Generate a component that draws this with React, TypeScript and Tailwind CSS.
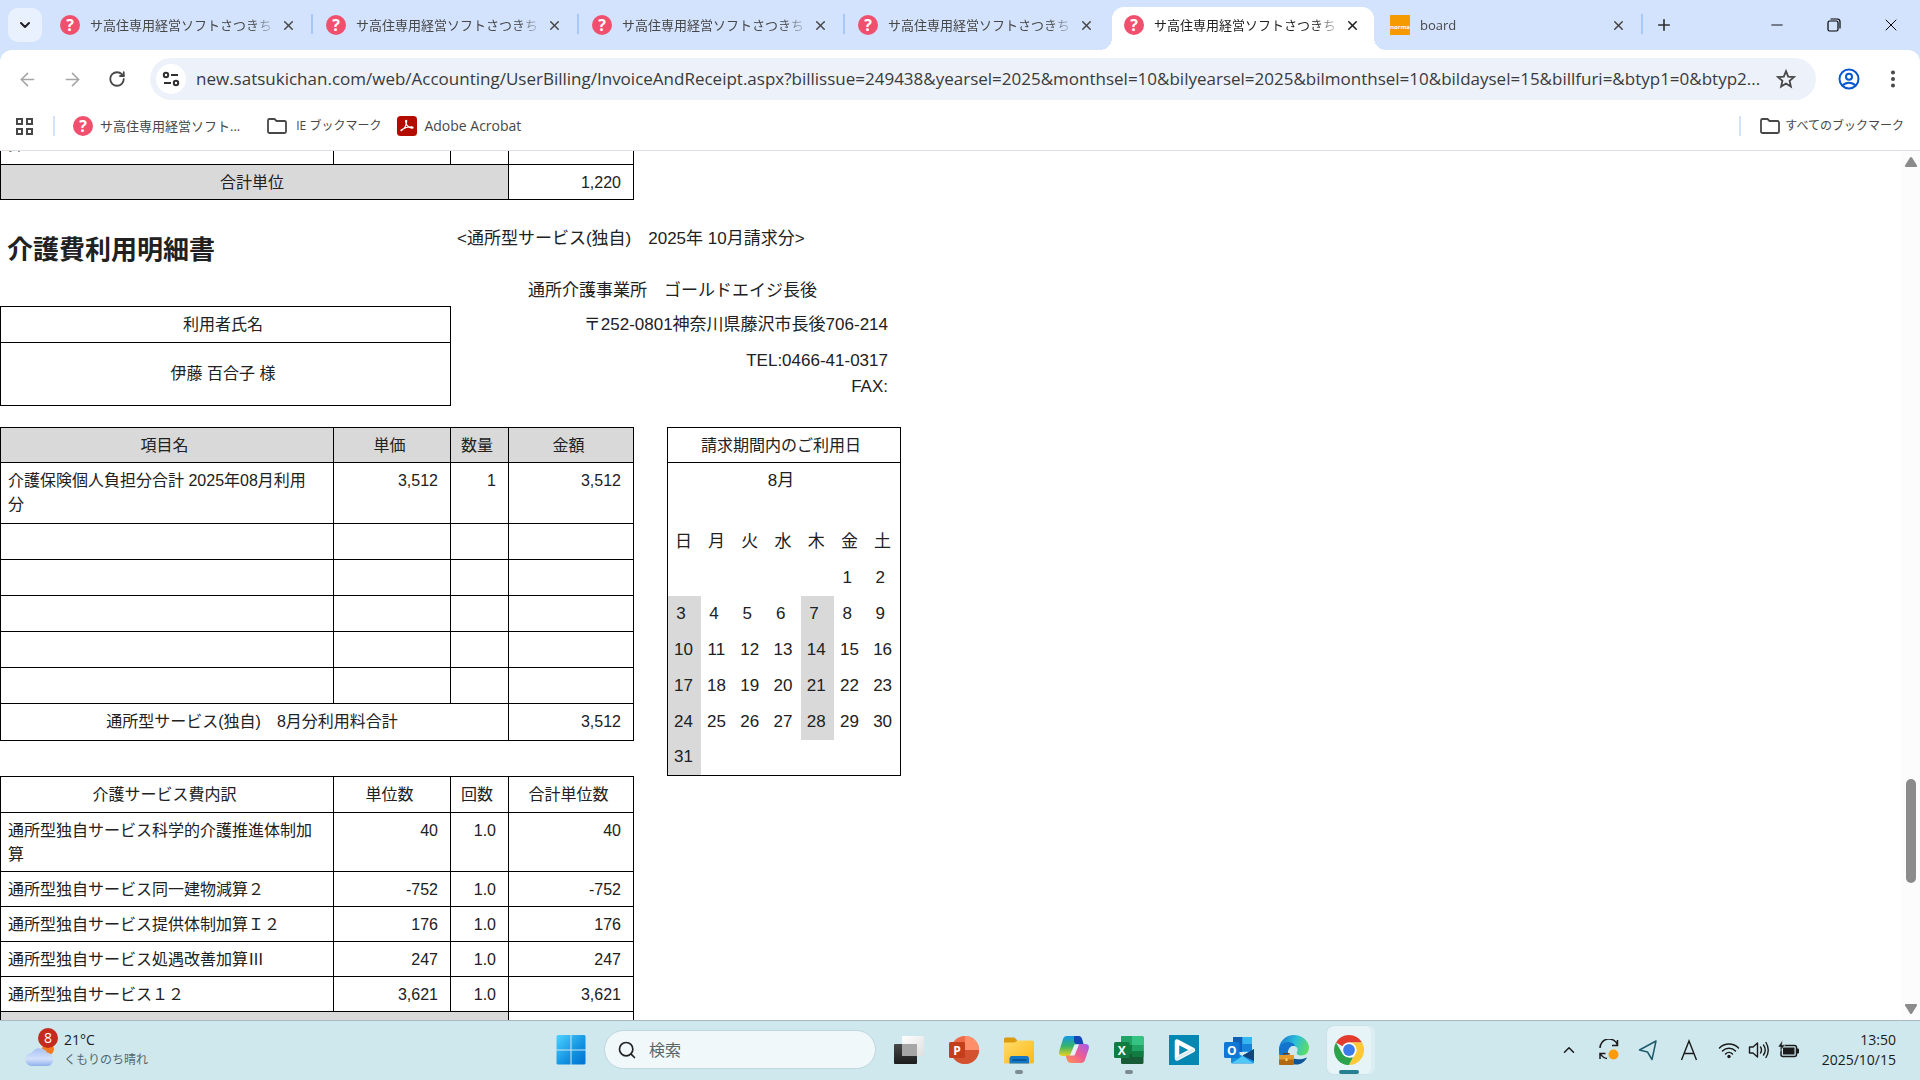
import type { ReactNode } from "react";
import {
  ArrowLeft,
  ArrowRight,
  ChevronDown,
  ChevronUp,
  EllipsisVertical,
  Minus,
  Plus,
  RotateCw,
  Search,
  X,
} from "lucide-react";

const TAB_TITLE = "サ高住専用経営ソフトさつきち";
const PAGE_URL =
  "new.satsukichan.com/web/Accounting/UserBilling/InvoiceAndReceipt.aspx?billissue=249438&yearsel=2025&monthsel=10&bilyearsel=2025&bilmonthsel=10&bildaysel=15&billfuri=&btyp1=0&btyp2...";

const services = [
  { name: "通所型独自サービス科学的介護推進体制加算", units: "40", total: "40" },
  { name: "通所型独自サービス同一建物減算２", units: "-752", total: "-752" },
  { name: "通所型独自サービス提供体制加算Ｉ２", units: "176", total: "176" },
  { name: "通所型独自サービス処遇改善加算Ⅲ", units: "247", total: "247" },
  { name: "通所型独自サービス１２", units: "3,621", total: "3,621" },
];

const weekdays = ["日", "月", "火", "水", "木", "金", "土"];
const weeks = [
  [0, 0, 0, 0, 0, 1, 2],
  [3, 4, 5, 6, 7, 8, 9],
  [10, 11, 12, 13, 14, 15, 16],
  [17, 18, 19, 20, 21, 22, 23],
  [24, 25, 26, 27, 28, 29, 30],
  [31, 0, 0, 0, 0, 0, 0],
];

function Favicon() {
  return (
    <span className="flex size-5 shrink-0 items-center justify-center rounded-full bg-[#f0506e] text-base leading-5 font-bold text-white">
      ?
    </span>
  );
}

function FolderIcon() {
  return (
    <svg width="22" height="18" viewBox="0 0 22 18" fill="none" stroke="currentColor" strokeWidth="1.800" strokeLinejoin="round">
      <path d="M2 3.500A1.500 1.500 0 0 1 3.500 2H8.500L10.500 4H18.500A1.500 1.500 0 0 1 20 5.500V14.500A1.500 1.500 0 0 1 18.500 16H3.500A1.500 1.500 0 0 1 2 14.500z" />
    </svg>
  );
}

function Tab({
  title,
  active,
  divider,
  icon,
}: {
  title: string;
  active?: boolean;
  divider?: boolean;
  icon: ReactNode;
}) {
  return (
    <div className="relative flex h-full w-[266px] min-w-0 items-end">
      <div
        className={
          active
            ? "relative flex h-[43px] w-[262px] items-center rounded-t-xl bg-white pr-3 pb-[7px] pl-3 text-[#1f1f1f]"
            : "flex h-[43px] w-[262px] items-center pr-3 pb-[7px] pl-3 text-[#474747]"
        }
      >
        {active && (
          <>
            <span className="absolute bottom-0 -left-3 size-3 bg-[radial-gradient(circle_at_0_0,transparent_12px,white_12px)]" />
            <span className="absolute -right-3 bottom-0 size-3 bg-[radial-gradient(circle_at_100%_0,transparent_12px,white_12px)]" />
          </>
        )}
        {icon}
        <span className="ml-[10px] flex-1 overflow-hidden [mask-image:linear-gradient(90deg,black_88%,#0003)] text-[13px] leading-5 whitespace-nowrap">
          {title}
        </span>
        <button aria-label="タブを閉じる" className="ml-[6px] flex size-5 items-center justify-center">
          <X size={15} strokeWidth={2.4} />
        </button>
      </div>
      {divider && <span className="mb-4 ml-px h-5 w-[2px] bg-[#a8c7fa]" />}
    </div>
  );
}

function TabStrip() {
  return (
    <header className="flex h-[50px] shrink-0 items-center bg-[#d3e3fd] pl-2">
      <button
        aria-label="タブを検索"
        className="flex size-[34px] shrink-0 items-center justify-center rounded-[10px] bg-[#e9f1fe] text-[#1f1f1f]"
      >
        <ChevronDown size={16} strokeWidth={3} />
      </button>
      <div className="ml-[6px] flex h-full">
        <Tab title={TAB_TITLE} divider icon={<Favicon />} />
        <Tab title={TAB_TITLE} divider icon={<Favicon />} />
        <Tab title={TAB_TITLE} divider icon={<Favicon />} />
        <Tab title={TAB_TITLE} icon={<Favicon />} />
        <Tab title={TAB_TITLE} active icon={<Favicon />} />
        <Tab
          title="board"
          divider
          icon={
            <span className="flex size-5 shrink-0 items-center justify-center bg-[#f59a00] pt-1 text-[6px] leading-4 font-bold text-white">
              norma
            </span>
          }
        />
      </div>
      <button aria-label="新しいタブ" className="ml-2 flex size-6 items-center justify-center text-[#303030]">
        <Plus size={18} strokeWidth={2.2} />
      </button>
      <div className="ml-auto flex pr-px text-black">
        <button aria-label="最小化" className="flex h-8 w-[57px] items-center justify-center">
          <Minus size={18} strokeWidth={1.2} />
        </button>
        <button aria-label="元に戻す" className="flex h-8 w-[57px] items-center justify-center">
          <svg width="14" height="14" viewBox="0 0 14 14" fill="none" stroke="currentColor" strokeWidth="1.2">
            <rect x="1" y="3" width="10" height="10" rx="1.5" />
            <path d="M3.5 1h7A2.5 2.5 0 0 1 13 3.500v7" />
          </svg>
        </button>
        <button aria-label="閉じる" className="flex h-8 w-[57px] items-center justify-center">
          <X size={20} strokeWidth={1.2} />
        </button>
      </div>
    </header>
  );
}

function Toolbar() {
  return (
    <div className="shrink-0 bg-[#d3e3fd]">
      <div className="flex h-[58px] items-center rounded-t-xl bg-white pr-4 pl-4 text-[#474747]">
        <button aria-label="戻る" className="flex w-[22px] justify-center text-[#a6a6a6]">
          <ArrowLeft size={21} strokeWidth={1.8} />
        </button>
        <button aria-label="進む" className="ml-[23px] flex w-[22px] justify-center text-[#a6a6a6]">
          <ArrowRight size={21} strokeWidth={1.8} />
        </button>
        <button aria-label="再読み込み" className="ml-[23px] flex w-[22px] justify-center">
          <RotateCw size={18} strokeWidth={2.4} />
        </button>
        <div className="ml-[22px] flex h-[42px] min-w-0 flex-1 items-center rounded-full bg-[#ecf1fa] pr-5 pl-[6px]">
          <button
            aria-label="サイト情報を表示"
            className="flex size-[30px] shrink-0 items-center justify-center rounded-full bg-white text-[#303030]"
          >
            <svg width="18" height="18" viewBox="0 0 18 18" fill="none" stroke="currentColor" strokeWidth="2">
              <circle cx="4" cy="5" r="2.200" />
              <path d="M9 5h7M2 13h7" />
              <circle cx="14" cy="13" r="2.200" />
            </svg>
          </button>
          <input
            aria-label="アドレス検索バー"
            defaultValue={PAGE_URL}
            className="ml-[10px] min-w-0 flex-1 bg-transparent text-[17px] leading-6 text-[#3a3a3a] outline-none"
          />
          <button aria-label="このタブをブックマークに追加">
            <svg width="20" height="20" viewBox="0 0 20 20" fill="none" stroke="currentColor" strokeWidth="1.800">
              <path d="M10 2.200 12.200 7.600 18 8.100 13.600 11.900 14.900 17.600 10 14.600 5.100 17.600 6.400 11.900 2 8.100 7.800 7.600z" />
            </svg>
          </button>
        </div>
        <button aria-label="プロフィール" className="ml-[22px] text-[#0b57d0]">
          <svg width="22" height="22" viewBox="0 0 22 22" fill="none" stroke="currentColor" strokeWidth="2">
            <circle cx="11" cy="11" r="9.500" />
            <circle cx="11" cy="8.800" r="3" />
            <path d="M4.500 17.500c3.500-3.800 9.500-3.800 13 0" />
          </svg>
        </button>
        <button aria-label="メニュー" className="ml-[22px]">
          <EllipsisVertical size={22} strokeWidth={2.400} />
        </button>
      </div>
      <nav className="flex h-[43px] items-center border-b border-[#dcdfe3] bg-white pr-4 pb-[6px] pl-[15px] text-[13px] leading-5 text-[#474747]">
        <button aria-label="アプリ">
          <svg width="19" height="19" viewBox="0 0 19 19" fill="none" stroke="currentColor" strokeWidth="2">
            <path d="M2 2h5v5H2zM12 2h5v5h-5zM2 12h5v5H2zM12 12h5v5h-5z" />
          </svg>
        </button>
        <span className="ml-[19px] h-5 w-[2px] bg-[#d3e3fd]" />
        <a href="#" className="ml-[18px] flex items-center gap-[7px]">
          <Favicon />
          サ高住専用経営ソフト...
        </a>
        <a href="#" className="ml-[26px] flex items-center gap-2 text-xs">
          <FolderIcon />
          IE ブックマーク
        </a>
        <a href="#" className="ml-4 flex items-center gap-[7px] text-sm">
          <svg width="20" height="20" viewBox="0 0 20 20">
            <rect width="20" height="20" rx="3.500" fill="#b30b00" />
            <path
              d="M4.300 14.600c2.600-1.300 5-5.300 5.400-9.300.1-1.400-1.300-1.300-1.100 0 .5 3.400 3.200 6.300 6.400 6.900 1.500.2 1.400-1.300 0-1.400-3.400-.3-7 .8-10.200 2.700-.9.500-1.100 1.400-.5 1.100z"
              fill="none"
              stroke="#fff"
              strokeWidth="1.200"
            />
          </svg>
          Adobe Acrobat
        </a>
        <span className="ml-auto h-5 w-[2px] bg-[#d3e3fd]" />
        <a href="#" className="ml-[18px] flex items-center gap-1 text-xs">
          <FolderIcon />
          すべてのブックマーク
        </a>
      </nav>
    </div>
  );
}

function Cell({
  children,
  align = "right",
  span,
}: {
  children?: ReactNode;
  align?: "left" | "right";
  span?: number;
}) {
  return (
    <td
      colSpan={span}
      className={
        align === "left"
          ? "border border-black pt-[6px] pr-4 pb-1 pl-[7px] text-left align-top"
          : "border border-black pt-[6px] pr-3 pb-1 pl-[7px] text-right align-top"
      }
    >
      {children}
    </td>
  );
}

function Head({ children, span, shaded }: { children: ReactNode; span?: number; shaded?: boolean }) {
  return (
    <th
      colSpan={span}
      className={
        shaded
          ? "border border-black bg-[#d9d9d9] pt-[6px] pr-3 pb-1 pl-[7px] text-center font-normal"
          : "border border-black py-[5px] pr-3 pl-[7px] text-center font-normal"
      }
    >
      {children}
    </th>
  );
}

function LedgerTable({ children }: { children: ReactNode }) {
  return (
    <table className="w-[634px] table-fixed border-collapse text-base leading-6">
      <colgroup>
        <col className="w-[333px]" />
        <col className="w-[117px]" />
        <col className="w-[58px]" />
        <col className="w-[125px]" />
      </colgroup>
      <tbody>{children}</tbody>
    </table>
  );
}

function StatementHeader() {
  return (
    <section className="flex">
      <div className="w-[451px] pt-[30px]">
        <h1 className="pl-[7px] text-[26px] leading-10 font-bold">介護費利用明細書</h1>
        <table className="mt-9 w-full border-collapse text-base leading-6">
          <tbody>
            <tr className="h-9">
              <Head>利用者氏名</Head>
            </tr>
            <tr className="h-[63px]">
              <td className="border border-black pr-3 pl-[7px] text-center">伊藤 百合子 様</td>
            </tr>
          </tbody>
        </table>
      </div>
      <div className="w-[437px] pt-[27px] pl-[6px] text-[17px] leading-6">
        <p>&lt;通所型サービス(独自)　2025年 10月請求分&gt;</p>
        <p className="mt-7 text-center">通所介護事業所　ゴールドエイジ長後</p>
        <p className="mt-[10px] text-right">〒252-0801神奈川県藤沢市長後706-214</p>
        <p className="mt-3 text-right">TEL:0466-41-0317</p>
        <p className="mt-[2px] text-right">FAX:</p>
      </div>
    </section>
  );
}

function UsageCalendar() {
  return (
    <table className="w-[234px] table-fixed border-collapse border border-black text-[17px] leading-6">
      <thead>
        <tr>
          <th colSpan={7} className="border border-black pt-[6px] pr-3 pb-1 pl-[6px] text-base leading-6 font-normal">
            請求期間内のご利用日
          </th>
        </tr>
        <tr className="h-[61px]">
          <th colSpan={7} className="pt-[6px] pr-3 pl-[6px] align-top font-normal">
            8月
          </th>
        </tr>
        <tr className="h-9">
          {weekdays.map((day) => (
            <th key={day} className="pr-[2px] font-normal">
              {day}
            </th>
          ))}
        </tr>
      </thead>
      <tbody>
        {weeks.map((week, row) => (
          <tr key={row} className="h-9">
            {week.map((day, col) => (
              <td
                key={col}
                className={
                  day >= 3 && (col === 0 || col === 4)
                    ? "bg-[#d9d9d9] pr-[2px] text-center"
                    : "pr-[2px] text-center"
                }
              >
                {day > 0 && (day < 10 ? `${day}\u00a0` : day)}
              </td>
            ))}
          </tr>
        ))}
      </tbody>
    </table>
  );
}

function Statement() {
  return (
    <main className="-mt-[19px] flex-1 text-[#212121]">
      <LedgerTable>
        <tr className="h-8">
          <td className="border border-black pr-3 pb-[7px] pl-[7px] text-left">算</td>
          <td className="border border-black" />
          <td className="border border-black" />
          <td className="border border-black" />
        </tr>
        <tr>
          <Head span={3} shaded>
            合計単位
          </Head>
          <Cell>1,220</Cell>
        </tr>
      </LedgerTable>
      <StatementHeader />
      <div className="mt-[21px] flex items-start gap-[33px]">
        <div>
          <LedgerTable>
            <tr>
              <Head shaded>項目名</Head>
              <Head shaded>単価</Head>
              <Head shaded>数量</Head>
              <Head shaded>金額</Head>
            </tr>
            <tr className="h-[61px]">
              <Cell align="left">介護保険個人負担分合計 2025年08月利用分</Cell>
              <Cell>3,512</Cell>
              <Cell>1</Cell>
              <Cell>3,512</Cell>
            </tr>
            {[0, 1, 2, 3, 4].map((row) => (
              <tr key={row} className="h-9">
                <Cell />
                <Cell />
                <Cell />
                <Cell />
              </tr>
            ))}
            <tr className="h-[37px]">
              <Head span={3}>通所型サービス(独自)　8月分利用料合計</Head>
              <Cell>3,512</Cell>
            </tr>
          </LedgerTable>
          <div className="mt-[35px]">
            <LedgerTable>
              <tr className="h-9">
                <Head>介護サービス費内訳</Head>
                <Head>単位数</Head>
                <Head>回数</Head>
                <Head>合計単位数</Head>
              </tr>
              {services.map((service) => (
                <tr key={service.name}>
                  <Cell align="left">{service.name}</Cell>
                  <Cell>{service.units}</Cell>
                  <Cell>1.0</Cell>
                  <Cell>{service.total}</Cell>
                </tr>
              ))}
              <tr className="h-9">
                <td colSpan={3} className="border border-black bg-[#d9d9d9]" />
                <Cell />
              </tr>
            </LedgerTable>
          </div>
        </div>
        <UsageCalendar />
      </div>
    </main>
  );
}

function Scrollbar() {
  return (
    <div className="flex w-[19px] shrink-0 flex-col items-center bg-[#fcfcfc] py-[5px] text-[#8b8b8b]">
      <svg width="14" height="12" viewBox="0 0 14 12" fill="currentColor">
        <path d="M6 1.500 1 9.500Q.500 11 2 11h10q1.500 0 1-1.500L8 1.500Q7 .300 6 1.500z" />
      </svg>
      <div className="flex w-full flex-1 flex-col items-center">
        <div className="grow-[612]" />
        <div className="w-[10px] grow-[104] rounded-full bg-[#8b8b8b]" />
        <div className="grow-[120]" />
      </div>
      <svg width="14" height="12" viewBox="0 0 14 12" fill="currentColor">
        <path d="M6 10.500 1 2.500Q.500 1 2 1h10q1.500 0 1 1.500L8 10.500Q7 11.700 6 10.500z" />
      </svg>
    </div>
  );
}

function TaskButton({
  label,
  running,
  active,
  children,
}: {
  label: string;
  running?: boolean;
  active?: boolean;
  children: ReactNode;
}) {
  return (
    <button
      aria-label={label}
      className={
        active
          ? "relative flex h-12 w-11 shrink-0 items-center justify-center rounded-md bg-[#e6f3f7] shadow-[4px_0_0_#dbeef3,0_0_1px_#9fb8c0]"
          : "relative flex h-12 w-11 shrink-0 items-center justify-center"
      }
    >
      {children}
      {running && <span className="absolute bottom-0 h-1 w-2 rounded-full bg-[#7d8b8f]" />}
      {active && <span className="absolute bottom-0 h-1 w-5 rounded-full bg-[#27808f]" />}
    </button>
  );
}

function StartIcon() {
  return (
    <svg width="30" height="30" viewBox="0 0 30 30">
      <defs>
        <linearGradient id="start" gradientUnits="userSpaceOnUse" x1="0" y1="0" x2="30" y2="30">
          <stop stopColor="#4fd3ff" />
          <stop offset=".6" stopColor="#1290e0" />
          <stop offset="1" stopColor="#0070d0" />
        </linearGradient>
      </defs>
      <path fill="url(#start)" d="M1.500 0H14.500V14.500H.500V1.500zM15.500 0H28.500L29.500 1V14.500H15.500zM.500 15.500H14.500V29.500H1.500L.500 28.500zM15.500 15.500H29.500V28.500L28.500 29.500H15.500z" />
    </svg>
  );
}

function TaskViewIcon() {
  return (
    <svg width="30" height="30" viewBox="0 0 30 30">
      <defs>
        <linearGradient id="tv-dark" x1="0" y1="0" x2="0" y2="1">
          <stop stopColor="#484848" />
          <stop offset="1" stopColor="#1c1c1c" />
        </linearGradient>
        <linearGradient id="tv-light" x1="0" y1="0" x2="1" y2="1">
          <stop stopColor="#fff" />
          <stop offset="1" stopColor="#dedede" />
        </linearGradient>
      </defs>
      <rect x="0" y="9" width="23" height="20" rx="1" fill="url(#tv-dark)" />
      <rect x="8" y="1" width="22" height="20" rx="1" fill="url(#tv-light)" />
      <rect x="8" y="9" width="15" height="12" fill="#a6a6a6" />
    </svg>
  );
}

function PowerPointIcon() {
  return (
    <svg width="30" height="30" viewBox="0 0 30 30">
      <circle cx="16" cy="15" r="14" fill="#ed6c47" />
      <path d="M16 1a14 14 0 0 1 14 14H16z" fill="#ff8f6b" />
      <path d="M2 15h28a14 14 0 0 1-28 0z" fill="#d35230" />
      <rect x="0" y="7" width="16" height="16" rx="1.500" fill="#c43e1c" />
      <text x="8" y="19.500" textAnchor="middle" fontSize="12" fontWeight="700" fill="#fff">
        P
      </text>
    </svg>
  );
}

function ExplorerIcon() {
  return (
    <svg width="30" height="30" viewBox="0 0 30 30">
      <defs>
        <linearGradient id="folder" x1="0" y1="0" x2="1" y2="1">
          <stop stopColor="#ffdc6b" />
          <stop offset="1" stopColor="#fbb914" />
        </linearGradient>
      </defs>
      <path d="M0 4a1.500 1.500 0 0 1 1.500-1.500h9L13 5v5H0z" fill="#dc9a0c" />
      <path d="M0 7.500h10.500L13.500 5.500H28.500A1.500 1.500 0 0 1 30 7v20a1.500 1.500 0 0 1-1.500 1.500h-27A1.500 1.500 0 0 1 0 27z" fill="url(#folder)" />
      <path d="M5.500 28.500V23.500a2.500 2.500 0 0 1 2.500-2.500h14.500a2.500 2.500 0 0 1 2.500 2.500V28.500z" fill="#1377c9" />
      <path d="M9 25h13" stroke="#0a4e91" strokeWidth="1.500" strokeLinecap="round" />
    </svg>
  );
}

function CopilotIcon() {
  return (
    <svg width="30" height="30" viewBox="0 0 30 30">
      <defs>
        <linearGradient id="cp-a" x1="0" y1="0" x2="0" y2="1">
          <stop stopColor="#1597e8" />
          <stop offset=".5" stopColor="#33b36b" />
          <stop offset="1" stopColor="#e9d31b" />
        </linearGradient>
        <linearGradient id="cp-b" x1="1" y1="0" x2="0" y2="1">
          <stop stopColor="#a35af0" />
          <stop offset=".5" stopColor="#ef5d93" />
          <stop offset="1" stopColor="#ff9a4d" />
        </linearGradient>
      </defs>
      <path d="M8 1h11q3 0 4 3l1.500 5H19q-3 0-4 3l-2 6q-1 3-4 3H4q-5 0-3.700-5L4 4q1-3 4-3z" fill="url(#cp-a)" />
      <path d="M15 1h4.500q2.500 0 3.500 3l1.500 5.500H19q-3 0-4-3z" fill="#1546b8" />
      <path d="M22 28H12q-3 0-4-3l-1.500-4.500H11q3 0 4-3l2-6q1-2.500 4-2.500h5q5 0 3.700 5L26 25q-1 3-4 3z" fill="url(#cp-b)" />
      <path d="M15.500 9.500h4.500l-4.500 11h-4.500z" fill="#e3f2f5" />
    </svg>
  );
}

function ExcelIcon() {
  return (
    <svg width="30" height="30" viewBox="0 0 30 30">
      <rect x="7" y="1" width="22.500" height="28" rx="1.500" fill="#185c37" />
      <path d="M7 2.500A1.500 1.500 0 0 1 8.500 1H18v9H7z" fill="#21a366" />
      <path d="M18 1h10A1.500 1.500 0 0 1 29.500 2.500V10H18z" fill="#33c481" />
      <path d="M7 10h11v9H7z" fill="#107c41" />
      <path d="M18 10h11.500v9H18z" fill="#21a366" />
      <path d="M18 16h11.500v6H18z" fill="#107c41" />
      <rect x="0" y="7" width="15.500" height="16" rx="1.500" fill="#107c41" />
      <text x="7.750" y="19.500" textAnchor="middle" fontSize="12" fontWeight="700" fill="#fff">
        X
      </text>
    </svg>
  );
}

function PlayerIcon() {
  return (
    <svg width="30" height="30" viewBox="0 0 30 30">
      <rect width="30" height="30" fill="#0487b2" />
      <path d="M8 6.500v17l16-8.500z" fill="none" stroke="#fff" strokeWidth="4.500" strokeLinejoin="round" />
      <path d="M8 23.500 24 15" stroke="#dcecf2" strokeWidth="3" strokeLinecap="round" />
    </svg>
  );
}

function OutlookIcon() {
  return (
    <svg width="30" height="30" viewBox="0 0 30 30">
      <rect x="9" y="2" width="19" height="15" rx="1" fill="#28a8ea" />
      <path d="M9 2h9.500v7H9z" fill="#0f5fb3" />
      <path d="M18.500 2H28v7h-9.500z" fill="#35b8f1" />
      <path d="M9 9h9.500v8H9z" fill="#0a64c4" />
      <path d="M18.500 9H28v7h-9.500z" fill="#1684d8" />
      <path d="M7 15l11.500 6L30 14v13a1.500 1.500 0 0 1-1.500 1.500h-20A1.500 1.500 0 0 1 7 27z" fill="#1490df" />
      <path d="M30 14v12L18.500 20.500z" fill="#12457d" />
      <path d="M8 28l10.500-7 10.500 7z" fill="#50c8f5" />
      <rect x="0" y="7" width="15.500" height="16" rx="1.500" fill="#0f78d4" />
      <text x="7.750" y="19.500" textAnchor="middle" fontSize="12" fontWeight="700" fill="#fff">
        O
      </text>
    </svg>
  );
}

function EdgeIcon() {
  return (
    <svg width="30" height="30" viewBox="0 0 30 30">
      <defs>
        <linearGradient id="edge-top" x1="0" y1=".3" x2="1" y2=".6">
          <stop stopColor="#1478d4" />
          <stop offset=".5" stopColor="#2cc0d8" />
          <stop offset="1" stopColor="#5fdc62" />
        </linearGradient>
      </defs>
      <path d="M0 15C0 6 7 0 15 0s15 6 15 12.500c0 5-3.500 8-7.500 8-3.500 0-5.500-1.500-4.500-3.500 2-4-1-6.500-4.500-6C9 11.500 8.500 16 9 20H0z" fill="url(#edge-top)" />
      <path d="M0 15c0-4 4-8 9-8 3 0 6 1.500 7.500 4-5-1-8 2.500-7.500 9H1z" fill="#1473cd" />
      <path d="M14 29c-3-2-4-5-3-8 2 3 9 5 17 1.500-2.500 5-8 8.500-14 6.500z" fill="#0c5697" />
      <rect x="0" y="20" width="15" height="10" rx="1" fill="#b26a12" />
      <path d="M0 20h15v4.500H0z" fill="#e49a2b" />
      <path d="M5 20v-1.500h5V20" fill="none" stroke="#6b3a05" strokeWidth="1.200" />
      <rect x="6.500" y="23.500" width="2" height="2.500" fill="#ffdf6e" />
    </svg>
  );
}

function ChromeIcon() {
  return (
    <svg width="30" height="30" viewBox="0 0 30 30">
      <path d="M15 0a15 15 0 0 1 13 7.500H15a7.500 7.500 0 0 0-6.500 3.750L2 7.500A15 15 0 0 1 15 0z" fill="#e33b2e" />
      <path d="M2 7.500 8.500 18.750A7.500 7.500 0 0 0 15 22.500L14.800 30A15 15 0 0 1 2 7.500z" fill="#2ba24c" />
      <path d="M28 7.500A15 15 0 0 1 14.800 30L21.500 18.750A7.500 7.500 0 0 0 15 7.500z" fill="#fcc934" />
      <path d="M8.500 18.750 15 22.500h4L14.800 30A15 15 0 0 1 6 27z" fill="#2ba24c" />
      <circle cx="15" cy="15" r="7.500" fill="#fff" />
      <circle cx="15" cy="15" r="5.900" fill="#3b7bea" />
    </svg>
  );
}

function Weather() {
  return (
    <button className="flex items-center text-left">
      <span className="relative">
        <svg width="32" height="44" viewBox="0 0 32 44">
          <defs>
            <linearGradient id="cloud" x1="0" y1="0" x2="0" y2="1">
              <stop stopColor="#a9c2f4" />
              <stop offset=".6" stopColor="#d3e1fb" />
              <stop offset="1" stopColor="#8fb0ec" />
            </linearGradient>
          </defs>
          <circle cx="24" cy="21" r="6" fill="#f47b20" />
          <path d="M8 38a6.500 6.500 0 0 1-.5-13A9 9 0 0 1 23 24.500 7 7 0 0 1 24.500 38z" fill="url(#cloud)" />
        </svg>
        <span className="absolute top-0 right-0 flex h-5 w-5 translate-x-[2px] items-center justify-center rounded-full bg-[#c42b1c] text-sm leading-5 text-white">
          8
        </span>
      </span>
      <span className="ml-2 text-sm leading-5 text-[#1b1b1b]">
        21°C
        <span className="block text-xs leading-5 text-[#55666b]">くもりのち晴れ</span>
      </span>
    </button>
  );
}

function Tray() {
  return (
    <div className="flex items-center text-[#1b1b1b]">
      <button aria-label="隠れているインジケーター">
        <ChevronUp size={18} strokeWidth={2} />
      </button>
      <svg className="ml-5" width="22" height="22" viewBox="0 0 22 22" fill="none" stroke="currentColor" strokeWidth="1.500">
        <path d="M2 9a9 9 0 0 1 17.500-3M19.500 1v5.500H14M9 19.500A9 9 0 0 1 2.500 15M2 20v-5.500h5.500" />
        <circle cx="15.500" cy="15.500" r="5" fill="#ff9a0a" stroke="none" />
      </svg>
      <svg className="ml-[18px]" width="22" height="22" viewBox="0 0 22 22" fill="none" stroke="#1e5b6b" strokeWidth="1.500" strokeLinejoin="round">
        <path d="M18 2 1.500 11 9.500 13 14 20.500z" />
      </svg>
      <svg className="ml-5" width="18" height="22" viewBox="0 0 18 22" fill="none" stroke="currentColor" strokeWidth="1.400">
        <path d="M1.500 21 9 2l7.500 19M4 14.500h10" />
      </svg>
      <svg className="ml-5" width="22" height="22" viewBox="0 0 22 22" fill="none" stroke="currentColor" strokeWidth="1.500" strokeLinecap="round">
        <path d="M1.500 9a13.500 13.500 0 0 1 19 0M4.500 12a9.200 9.200 0 0 1 13 0M7.500 15a5 5 0 0 1 7 0" />
        <circle cx="11" cy="17.500" r="1.700" fill="currentColor" stroke="none" />
      </svg>
      <svg className="ml-2" width="22" height="22" viewBox="0 0 22 22" fill="none" stroke="currentColor" strokeWidth="1.400" strokeLinecap="round" strokeLinejoin="round">
        <path d="M1.500 8v6h3.500l4.500 4V4L5 8zM12.500 8q2 3 0 6M15.500 6q3.500 5 0 10M18 3.500q4.500 7.500 0 15" />
      </svg>
      <svg className="ml-2" width="22" height="22" viewBox="0 0 22 22">
        <rect x="3" y="6.500" width="15.500" height="11" rx="2" fill="none" stroke="#1b1b1b" strokeWidth="1.500" />
        <rect x="5" y="8.500" width="11.500" height="7" fill="#1b1b1b" />
        <path d="M18.500 9.500h1.500q1 0 1 1v3q0 1-1 1h-1.500z" fill="#1b1b1b" />
        <path d="M4.500 1 0 8h3l-1 4.500 5-6.500H4z" fill="#1b1b1b" stroke="#cfe8ee" strokeWidth=".5" />
      </svg>
      <div className="ml-[22px] text-right text-sm leading-5">
        <p>13:50</p>
        <p>2025/10/15</p>
      </div>
    </div>
  );
}

function Taskbar() {
  return (
    <footer className="flex h-[60px] shrink-0 items-center border-t border-[#a9b9bf] bg-[#cfe8ee] pb-[2px]">
      <div className="flex flex-1 pl-6">
        <Weather />
      </div>
      <div className="flex items-center gap-[11px]">
        <TaskButton label="スタート">
          <StartIcon />
        </TaskButton>
        <label className="flex h-[39px] w-[272px] items-center rounded-full border border-[#bfd6dd] bg-[#f0f8fa] pl-3">
          <Search size={20} strokeWidth={2} className="text-[#222]" />
          <input
            aria-label="検索"
            placeholder="検索"
            className="ml-3 w-48 bg-transparent text-base leading-6 outline-none placeholder:text-[#5c6669]"
          />
        </label>
        <TaskButton label="タスク ビュー">
          <TaskViewIcon />
        </TaskButton>
        <TaskButton label="PowerPoint">
          <PowerPointIcon />
        </TaskButton>
        <TaskButton label="エクスプローラー" running>
          <ExplorerIcon />
        </TaskButton>
        <TaskButton label="Copilot">
          <CopilotIcon />
        </TaskButton>
        <TaskButton label="Excel" running>
          <ExcelIcon />
        </TaskButton>
        <TaskButton label="プレーヤー">
          <PlayerIcon />
        </TaskButton>
        <TaskButton label="Outlook">
          <OutlookIcon />
        </TaskButton>
        <TaskButton label="Edge">
          <EdgeIcon />
        </TaskButton>
        <TaskButton label="Chrome" active>
          <ChromeIcon />
        </TaskButton>
      </div>
      <div className="flex flex-1 justify-end pr-6">
        <Tray />
      </div>
    </footer>
  );
}

export default function App() {
  return (
    <div className="flex h-screen flex-col overflow-hidden bg-white font-['Open_Sans','Noto_Sans_CJK_JP',sans-serif]">
      <TabStrip />
      <Toolbar />
      <div className="flex min-h-0 flex-1 overflow-hidden font-['Liberation_Sans','Noto_Sans_CJK_JP',sans-serif]">
        <Statement />
        <Scrollbar />
      </div>
      <Taskbar />
    </div>
  );
}
